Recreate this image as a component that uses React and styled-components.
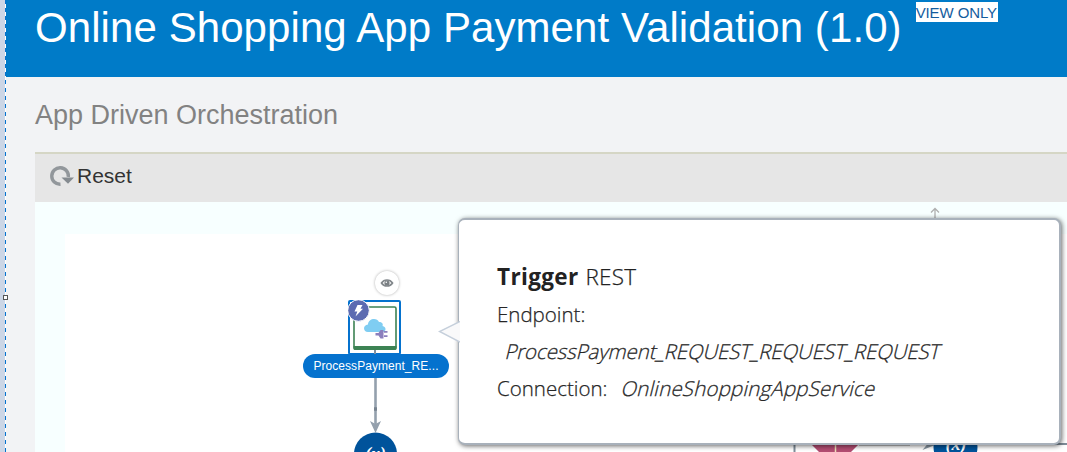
import React from "react";
import styled, { createGlobalStyle } from "styled-components";

const GlobalStyle = createGlobalStyle`
  * { box-sizing: border-box; }
  body { margin: 0; overflow: hidden; font-family: "Liberation Sans", Arial, sans-serif; }
`;

const Page = styled.div`
  display: flex;
  width: 1067px;
  height: 452px;
  overflow: hidden;
  background: #f2f3f5;
`;

const Gutter = styled.div`
  position: relative;
  flex: none;
  width: 6px;
  background: linear-gradient(#ccd6e6, #ccd6e6) 0 0 / 5px 100% no-repeat,
    repeating-linear-gradient(#0572ce 0 4px, #ffffff 4px 8px);
`;

const Handle = styled.span`
  position: absolute;
  z-index: 1;
  left: 3px;
  top: 295px;
  width: 5px;
  height: 5px;
  background: #fff;
  border: 1px solid #555;
`;

const Main = styled.main`
  flex: 1;
  min-width: 0;
  display: flex;
  flex-direction: column;
`;

const Header = styled.header`
  display: flex;
  align-items: flex-start;
  gap: 14px;
  height: 77px;
  padding-left: 29px;
  background: #007bc8;
`;

const Title = styled.h1`
  margin: 4px 0 0;
  font-size: 42px;
  line-height: 48px;
  font-weight: 400;
  letter-spacing: ${(p) => p.$spacing};
  white-space: nowrap;
  color: #fff;
`;

const ViewOnly = styled.span`
  margin-top: 2px;
  width: 82px;
  height: 20px;
  background: #fff;
  color: #145c9e;
  font-size: 15px;
  line-height: 21px;
  letter-spacing: -0.1px;
  white-space: nowrap;
`;

const Subtitle = styled.h2`
  margin: 0;
  height: 75px;
  padding-left: 29px;
  font-size: 27px;
  line-height: 77px;
  font-weight: 400;
  color: #828282;
  white-space: nowrap;
`;

const Toolbar = styled.div`
  display: flex;
  align-items: center;
  gap: 3px;
  flex: none;
  height: 50px;
  margin-left: 29px;
  padding: 0 0 5px 15px;
  border-top: 2px solid #d5d6c5;
  background: #e6e6e6;
`;

const ResetLabel = styled.span`
  font-size: 21px;
  line-height: 24px;
  color: #333;
`;

const Canvas = styled.section`
  position: relative;
  flex: 1;
  margin-left: 29px;
  background: linear-gradient(#fff, #fff) 30px 32px no-repeat, #f7ffff;
`;

const Connectors = styled.svg`
  position: absolute;
  inset: 0;
  width: 1032px;
  height: 250px;
`;

const EyeButton = styled.div`
  position: absolute;
  left: 340px;
  top: 69px;
  width: 24px;
  height: 24px;
  display: grid;
  place-items: center;
  border-radius: 50%;
  background: #fff;
  box-shadow: 0 0 3px rgba(0, 0, 0, 0.32);
`;

const TriggerNode = styled.div`
  position: absolute;
  left: 313px;
  top: 98px;
  width: 53px;
  height: 55px;
  border: 2px solid #0572ce;
  border-radius: 2px;
  background: #fff;
`;

const TriggerIcon = styled.svg`
  position: absolute;
  left: -2px;
  top: -2px;
`;

const NodeLabel = styled.div`
  position: absolute;
  left: 268px;
  top: 152px;
  width: 146px;
  height: 24px;
  border-radius: 12px;
  background: #0572ce;
  color: #fff;
  font-size: 12px;
  line-height: 24px;
  letter-spacing: ${(p) => p.$spacing};
  text-align: center;
  white-space: nowrap;
`;

const Popup = styled.article`
  position: absolute;
  left: 423px;
  top: 16px;
  width: 603px;
  height: 227px;
  padding: 39px 38px;
  border: 2px solid #a8b1bb;
  border-left-width: 1px;
  border-radius: 7px;
  background: #fff;
  box-shadow: 1px 1px 5px rgba(0, 0, 0, 0.6);
  color: #262626;
  font-family: "Open Sans", "Noto Sans", sans-serif;
`;

const PopupArrow = styled.svg`
  position: absolute;
  left: -21px;
  top: 101px;
`;

const PopupTitle = styled.div`
  height: 37px;
  font-size: 22.5px;
  line-height: 36px;
  color: #222;
  white-space: pre;
`;

const Strong = styled.b`
  font-weight: 700;
  letter-spacing: ${(p) => p.$spacing};
`;

const PopupLine = styled.div`
  height: 37px;
  padding-left: ${(p) => p.$indent || "0"};
  font-size: 20.5px;
  line-height: 37px;
  white-space: nowrap;
`;

const Run = styled.span`
  display: inline-block;
  font-weight: 300;
  -webkit-text-stroke: 0.25px currentColor;
  transform: ${(p) => (p.$slanted ? "skewX(-14deg)" : "none")};
  letter-spacing: ${(p) => p.$spacing || "0"};
  margin-left: ${(p) => p.$gap || "0"};
`;

const VariableMark = ({ x, y }) => (
  <text x={x} y={y} textAnchor="middle" fontFamily="Liberation Serif, serif" fontStyle="italic" fontWeight="700" fontSize="18" fill="#fff">(x)</text>
);

export default function App() {
  return (
    <Page>
      <GlobalStyle />
      <Gutter><Handle /></Gutter>
      <Main>
        <Header>
          <Title $spacing="0.08px">Online Shopping App Payment Validation (1.0)</Title>
          <ViewOnly>VIEW ONLY</ViewOnly>
        </Header>
        <Subtitle>App Driven Orchestration</Subtitle>
        <Toolbar>
          <svg width="24" height="22" viewBox="0 0 24 22">
            <path d="M10.500 19.300 A8.300 8.300 0 1 1 18.300 12" fill="none" stroke="#92979b" strokeWidth="3.400" />
            <path d="M11.500 12.500H24L18 18.800z" fill="#858b90" />
          </svg>
          <ResetLabel>Reset</ResetLabel>
        </Toolbar>
        <Canvas>
          <Connectors viewBox="35 202 1032 250">
            <path d="M935 220V209M931 212.500l4-4 4 4" fill="none" stroke="#b0b0b0" strokeWidth="1.300" />
            <path d="M794.500 452V444H1067" fill="none" stroke="#7f8d99" strokeWidth="2" />
            <path d="M811 444h48l-24 24z" fill="#b34d72" />
            <path d="M835.500 444v8" stroke="#eee0ba" strokeWidth="1.500" />
            <path d="M859 445h51" stroke="#8c8c8c" strokeWidth="1" />
            <path d="M922.500 450l5-6h10z" fill="#8795a1" />
            <circle cx="955.500" cy="447" r="22" fill="#00539b" />
            <VariableMark x={956} y={450} />
            <circle cx="375.500" cy="454" r="21.500" fill="#00539b" />
            <VariableMark x={375.500} y={459.500} />
            <path d="M375.500 377V428" stroke="#94a0ad" strokeWidth="2.600" />
            <path d="M374 409h3" stroke="#778390" strokeWidth="3.500" />
            <path d="M370 421l5.500 3 5.500-3-5.500 12z" fill="#94a0ad" />
          </Connectors>
          <EyeButton>
            <svg width="14" height="10" viewBox="0 0 14 10">
              <path d="M1.500 5C4 1 10 1 12.500 5 10 9 4 9 1.500 5z" fill="#fff" stroke="#82878b" strokeWidth="1.700" />
              <circle cx="7" cy="5" r="2.600" fill="#7b8084" />
              <circle cx="6.300" cy="4.200" r=".8" fill="#fff" />
            </svg>
          </EyeButton>
          <TriggerNode>
            <TriggerIcon width="53" height="55" viewBox="0 0 53 55">
              <rect x="6" y="7" width="42" height="42" rx="1.500" fill="#fff" stroke="#3d8354" strokeWidth="1.600" />
              <path d="M5.500 46h43v2.500q0 1.500-1.500 1.500H7q-1.500 0-1.500-1.500z" fill="#3d8354" />
              <path d="M27 50v5" stroke="#8090a0" strokeWidth="2" />
              <path d="M20 32c-5 0-5.500-7 0-7.500 0-6 9-7.500 11-2.500 3 0 4.500 2 3.500 4 4 .5 4 6 0 6z" fill="#7fcdf2" />
              <path d="M27.500 33h3l2-3h3v8.500h-3l-2-3h-3z" fill="#8b7fbd" />
              <path d="M36 31.800h3.500M36 36.200h3.500" stroke="#8b7fbd" strokeWidth="1.800" />
              <circle cx="10.500" cy="10.500" r="10.800" fill="#5c6bb1" stroke="#fff" strokeWidth="1" />
              <path d="M9.500 5h5l-2 3.800h2.500L7.500 16.500l1.800-5H6.500z" fill="#fff" />
            </TriggerIcon>
          </TriggerNode>
          <NodeLabel $spacing="0.05px">ProcessPayment_RE...</NodeLabel>
          <Popup>
            <PopupArrow width="22" height="22" viewBox="0 0 22 22">
              <path d="M22 .5L1.500 10.500 22 21" fill="#f9f9fa" stroke="#c5cfdb" strokeWidth="1.500" />
            </PopupArrow>
            <PopupTitle><Strong $spacing="0.35px">Trigger</Strong><Run $gap="7px" $spacing="0.2px">REST</Run></PopupTitle>
            <PopupLine><Run>Endpoint:</Run></PopupLine>
            <PopupLine $indent="9px"><Run $slanted $spacing="-0.12px">ProcessPayment_REQUEST_REQUEST_REQUEST</Run></PopupLine>
            <PopupLine><Run>Connection:</Run><Run $slanted $gap="15px" $spacing="0.18px">OnlineShoppingAppService</Run></PopupLine>
          </Popup>
        </Canvas>
      </Main>
    </Page>
  );
}
